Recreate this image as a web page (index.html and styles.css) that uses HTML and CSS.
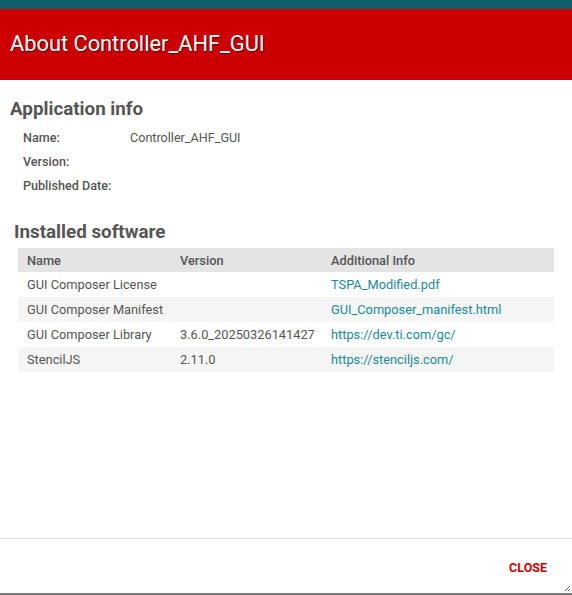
FILE: index.html
```html
<!DOCTYPE html>
<html>
<head>
<meta charset="utf-8">
<link rel="stylesheet" href="styles.css">
</head>
<body>
<div class="dialog">
  <div class="topbar"></div>
  <div class="header"><span class="title">About Controller_AHF_GUI</span></div>
  <div class="content">
    <h2 class="h-app">Application info</h2>
    <div class="info">
      <div class="info-row"><span class="label">Name:</span><span class="value">Controller_AHF_GUI</span></div>
      <div class="info-row"><span class="label">Version:</span><span class="value"></span></div>
      <div class="info-row"><span class="label">Published Date:</span><span class="value"></span></div>
    </div>
    <h2 class="h-sw">Installed software</h2>
    <table class="sw">
      <thead>
        <tr><th class="c1">Name</th><th class="c2">Version</th><th class="c3">Additional Info</th></tr>
      </thead>
      <tbody>
        <tr><td>GUI Composer License</td><td></td><td><a class="link">TSPA_Modified.pdf</a></td></tr>
        <tr class="alt"><td>GUI Composer Manifest</td><td></td><td><a class="link">GUI_Composer_manifest.html</a></td></tr>
        <tr><td>GUI Composer Library</td><td>3.6.0_20250326141427</td><td><a class="link">https://dev.ti.com/gc/</a></td></tr>
        <tr class="alt"><td>StencilJS</td><td>2.11.0</td><td><a class="link">https://stenciljs.com/</a></td></tr>
      </tbody>
    </table>
  </div>
  <div class="footer">
    <span class="close">CLOSE</span>
    <svg class="grip" width="8" height="8" viewBox="0 0 8 8"><path d="M7 2 L2 7 M7 5 L5 7" stroke="#666" stroke-width="1" fill="none"/></svg>
  </div>
</div>
</body>
</html>
```
FILE: styles.css
```css
html, body {
  margin: 0;
  padding: 0;
  background: #ffffff;
}
body {
  font-family: Roboto, "Liberation Sans", sans-serif;
  width: 572px;
  height: 595px;
  overflow: hidden;
}
.dialog {
  display: flex;
  flex-direction: column;
  height: 593px;
  border-bottom: 2px solid #7a7a7a;
  position: relative;
}
.topbar {
  height: 9px;
  background: #115e6b;
}
.header {
  height: 71px;
  background: #cc0000;
  display: flex;
  align-items: center;
  padding-left: 10px;
}
.title {
  color: #ffffff;
  font-size: 21.8px;
  text-shadow: 1px 1px 1px rgba(0,0,0,0.6);
  position: relative;
  top: -1px;
}
.content {
  flex: 1;
  padding: 0 18px 0 10px;
}
h2 {
  margin: 0;
  color: #555555;
  font-weight: 700;
  font-size: 18.8px;
}
.h-app {
  padding-top: 18px;
  line-height: 22px;
}
.info {
  padding: 5px 0 0 13px;
}
.info-row {
  display: flex;
  height: 24px;
  align-items: center;
  font-size: 12.6px;
}
.label {
  width: 107px;
  color: #555555;
  font-weight: 500;
}
.value {
  color: #555555;
}
.h-sw {
  margin-top: 24px;
  padding-left: 4px;
  line-height: 22px;
}
.sw {
  margin-top: 5px;
  margin-left: 8px;
  width: 536px;
  table-layout: fixed;
  border-collapse: collapse;
  font-size: 12.8px;
  color: #555555;
}
.sw th {
  background: #e4e4e4;
  text-align: left;
  font-weight: 500;
  height: 24px;
  padding: 0 9px;
}
.sw td {
  height: 25px;
  padding: 0 9px;
  white-space: nowrap;
}
.c1 { width: 135px; }
.c2 { width: 133px; }
.sw tr.alt td { background: #f5f5f5; }
.link {
  color: #1a8a99;
  text-decoration: none;
}
.footer {
  height: 54px;
  border-top: 1px solid #e0e0e0;
  display: flex;
  justify-content: flex-end;
  align-items: center;
  padding-right: 25px;
}
.close {
  color: #cc0000;
  font-weight: 700;
  font-size: 12.5px;
  position: relative;
  top: 1px;
}
.grip {
  position: absolute;
  right: 1px;
  bottom: 1px;
}
```
